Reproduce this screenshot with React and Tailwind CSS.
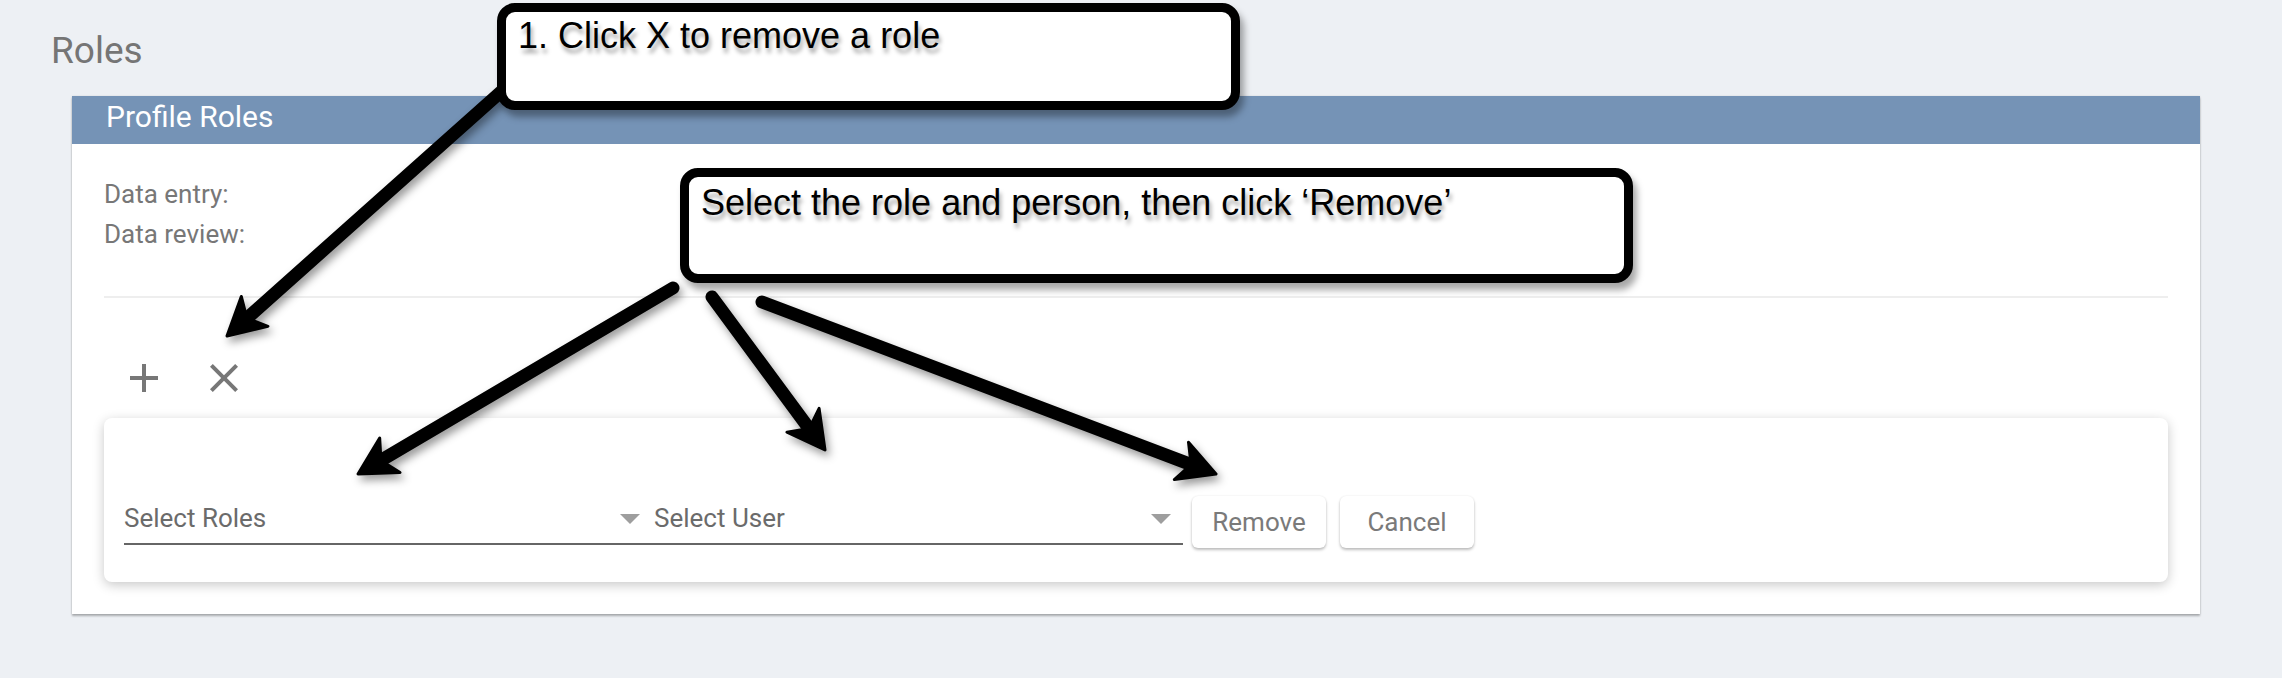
import React from 'react';

// arrows of the annotation layer, in page pixels: tail -> tip
const ARROWS = [
  { from: [503, 90], to: [227, 336] },
  { from: [673, 288], to: [358, 474] },
  { from: [712, 297], to: [825, 450] },
  { from: [762, 302], to: [1216, 474] },
];

const headPoints = ([x1, y1], [x2, y2], len = 37, half = 20) => {
  const d = Math.hypot(x2 - x1, y2 - y1);
  const ux = (x2 - x1) / d;
  const uy = (y2 - y1) / d;
  const nx = -uy;
  const ny = ux;
  const bx = x2 - ux * len;
  const by = y2 - uy * len;
  const notch = [x2 - ux * len * 0.72, y2 - uy * len * 0.72];
  return {
    notch,
    points: [
      [x2, y2],
      [bx + nx * half, by + ny * half],
      notch,
      [bx - nx * half, by - ny * half],
    ]
      .map((p) => p.join(','))
      .join(' '),
  };
};

const AddIcon = () => (
  <svg width="48" height="48" viewBox="0 0 24 24" fill="#777777">
    <path d="M19 13h-6v6h-2v-6H5v-2h6V5h2v6h6v2z" />
  </svg>
);

const CloseIcon = () => (
  <svg width="48" height="48" viewBox="0 0 24 24" fill="#777777">
    <path d="M19 6.41L17.59 5 12 10.59 6.41 5 5 6.41 10.59 12 5 17.59 6.41 19 12 13.41 17.59 19 19 17.59 13.41 12z" />
  </svg>
);

const SelectField = ({ label, width, textPad }) => (
  <div className={`mt-[5px] flex h-[44px] justify-between border-b-2 border-[#666666] ${width}`}>
    <span className={`mt-[4px] text-[26px] leading-none text-[#6b6b6b] ${textPad}`}>{label}</span>
    <span className="mr-[12px] mt-[13px] h-0 w-0 border-x-[10px] border-t-[10px] border-x-transparent border-t-[#9e9e9e]" />
  </div>
);

const FlatButton = ({ children, className = '' }) => (
  <button
    className={`flex h-[52px] w-[134px] items-center justify-center rounded-[6px] bg-white text-[26px] leading-none text-[#7a7a7a] shadow-[0_2px_3px_rgba(0,0,0,0.25),0_0_2px_rgba(0,0,0,0.08)] ${className}`}
  >
    {children}
  </button>
);

const Callout = ({ className, children }) => (
  <div
    className={`absolute rounded-[18px] border-[9px] border-black bg-white shadow-[4px_7px_7px_rgba(0,0,0,0.35)] ${className}`}
  >
    <p className="font-['Liberation_Sans',Arial,sans-serif] text-[36px] leading-none text-black [text-shadow:2px_5px_4px_rgba(0,0,0,0.35)]">
      {children}
    </p>
  </div>
);

export default function App() {
  return (
    <div className="relative h-[678px] w-full overflow-hidden bg-[#edf0f4] font-['Roboto',sans-serif]">
      <h1 className="pl-[51px] pt-[32px] text-[37px] font-normal leading-none text-[#757575]">Roles</h1>

      {/* Profile roles panel */}
      <section className="ml-[72px] mt-[27px] h-[518px] w-[2128px] bg-white shadow-[0_2px_2px_rgba(0,0,0,0.28),0_0_2px_rgba(0,0,0,0.1)]">
        <div className="h-[48px] bg-[#7593b6] pl-[34px] pt-[6px] text-[30px] leading-none text-white">Profile Roles</div>

        <div className="px-8 pt-[30px]">
          <div className="text-[26px] leading-[40px] text-[#777777]">
            <p>Data entry:</p>
            <p>Data review:</p>
          </div>

          <div className="mt-[42px] h-[2px] bg-[#eeeeee]" />

          <div className="ml-[16px] mt-[56px] flex gap-[32px]">
            <AddIcon />
            <CloseIcon />
          </div>

          {/* Remove form */}
          <div className="mt-[16px] h-[164px] rounded-[8px] bg-white pl-[20px] pt-[78px] shadow-[0_3px_12px_rgba(0,0,0,0.22)]">
            <div className="flex items-start">
              <SelectField label="Select Roles" width="w-[528px]" textPad="" />
              <SelectField label="Select User" width="w-[531px]" textPad="pl-[2px]" />
              <FlatButton className="ml-[9px]">Remove</FlatButton>
              <FlatButton className="ml-[14px]">Cancel</FlatButton>
            </div>
          </div>
        </div>
      </section>

      {/* Annotation layer */}
      <svg
        className="pointer-events-none absolute left-0 top-0 [filter:drop-shadow(3px_5px_4px_rgba(0,0,0,0.4))]"
        width="2282"
        height="678"
      >
        {ARROWS.map((a, i) => {
          const head = headPoints(a.from, a.to);
          return (
            <g key={i}>
              <line
                x1={a.from[0]}
                y1={a.from[1]}
                x2={head.notch[0]}
                y2={head.notch[1]}
                stroke="#000"
                strokeWidth="13"
                strokeLinecap="round"
              />
              <polygon points={head.points} fill="#000" stroke="#000" strokeWidth="3" strokeLinejoin="round" />
            </g>
          );
        })}
      </svg>

      <Callout className="left-[497px] top-[3px] h-[107px] w-[743px] pl-[12px] pt-[6px]">1. Click X to remove a role</Callout>
      <Callout className="left-[680px] top-[168px] h-[115px] w-[953px] pl-[12px] pt-[8px]">
        Select the role and person, then click ‘Remove’
      </Callout>
    </div>
  );
}
